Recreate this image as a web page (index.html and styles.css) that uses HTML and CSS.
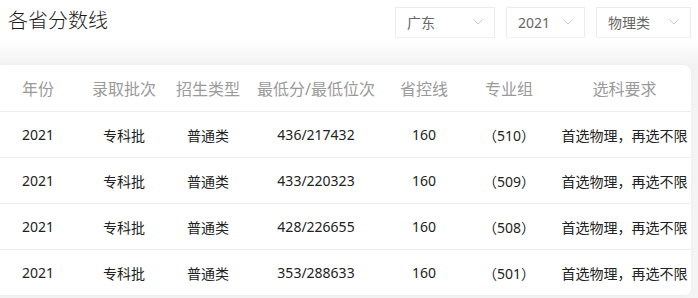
FILE: index.html
```html
<!DOCTYPE html>
<html lang="zh-CN">
<head>
<meta charset="utf-8">
<link rel="stylesheet" href="styles.css">
</head>
<body>
<header class="top">
  <h1 class="title">各省分数线</h1>
  <div class="filters">
    <div class="select s-prov"><span>广东</span><svg class="chev" viewBox="0 0 10 6" width="10" height="6"><path d="M0.5 0.5 L5 5 L9.5 0.5" fill="none" stroke="#c8c8c8" stroke-width="1"/></svg></div>
    <div class="select s-year"><span>2021</span><svg class="chev" viewBox="0 0 10 6" width="10" height="6"><path d="M0.5 0.5 L5 5 L9.5 0.5" fill="none" stroke="#c8c8c8" stroke-width="1"/></svg></div>
    <div class="select s-type"><span>物理类</span><svg class="chev" viewBox="0 0 10 6" width="10" height="6"><path d="M0.5 0.5 L5 5 L9.5 0.5" fill="none" stroke="#c8c8c8" stroke-width="1"/></svg></div>
  </div>
</header>
<section class="panel">
  <div class="card">
    <table class="grid">
      <colgroup>
        <col class="c1"><col class="c2"><col class="c3"><col class="c4"><col class="c5"><col class="c6"><col class="c7">
      </colgroup>
      <thead>
        <tr><th>年份</th><th>录取批次</th><th>招生类型</th><th>最低分/最低位次</th><th>省控线</th><th>专业组</th><th>选科要求</th></tr>
      </thead>
      <tbody>
        <tr><td>2021</td><td>专科批</td><td>普通类</td><td>436/217432</td><td>160</td><td>（510）</td><td>首选物理，再选不限</td></tr>
        <tr><td>2021</td><td>专科批</td><td>普通类</td><td>433/220323</td><td>160</td><td>（509）</td><td>首选物理，再选不限</td></tr>
        <tr><td>2021</td><td>专科批</td><td>普通类</td><td>428/226655</td><td>160</td><td>（508）</td><td>首选物理，再选不限</td></tr>
        <tr><td>2021</td><td>专科批</td><td>普通类</td><td>353/288633</td><td>160</td><td>（501）</td><td>首选物理，再选不限</td></tr>
      </tbody>
    </table>
  </div>
</section>
</body>
</html>
```

FILE: styles.css
```css
html, body {
  margin: 0;
  padding: 0;
  background: #f4f4f4;
}
body {
  font-family: "Noto Sans", "Noto Sans CJK SC", sans-serif;
  color: #333;
  width: 698px;
  height: 298px;
  overflow: hidden;
}
.top {
  display: flex;
  justify-content: space-between;
  align-items: flex-start;
  height: 40px;
  padding: 0 7px 0 8px;
  background: #fff;
}
.title {
  margin: 6px 0 0;
  font-size: 20px;
  line-height: 28px;
  font-weight: 300;
  color: #1a1a1a;
  font-family: "Noto Sans CJK SC", sans-serif;
}
.filters {
  display: flex;
  gap: 11px;
  margin-top: 7px;
}
.select {
  box-sizing: border-box;
  height: 31px;
  border: 1px solid #ececec;
  border-bottom-color: #f2f2f2;
  display: flex;
  align-items: center;
  justify-content: space-between;
  padding: 0 11px 0 11px;
  font-size: 14px;
  color: #666;
  background: #fff;
}
.select span { line-height: 20px; }
.s-prov { width: 100px; }
.s-year { width: 79px; }
.s-type { width: 95px; }
.chev { display: block; margin-top: -2px; }
.panel {
  background: linear-gradient(#ffffff 0px, #f3f3f3 24px, #f4f4f4 100%);
  padding: 25px 7px 0 0;
  height: 258px;
  box-sizing: border-box;
}
.card {
  width: 691px;
  background: #fff;
  border-radius: 0 8px 8px 0;
  box-shadow: 0 0 3px rgba(0,0,0,0.04);
  overflow: hidden;
}
.grid {
  width: 691px;
  border-collapse: collapse;
  table-layout: fixed;
}
.c1 { width: 76px; }
.c2 { width: 96px; }
.c3 { width: 72px; }
.c4 { width: 144px; }
.c5 { width: 72px; }
.c6 { width: 98px; }
.c7 { width: 133px; }
.grid th {
  height: 46px;
  padding: 0;
  font-size: 16px;
  font-weight: normal;
  color: #9a9a9a;
  text-align: center;
  border-bottom: 1px solid #ededed;
  white-space: nowrap;
}
.grid td {
  height: 45px;
  padding: 0;
  font-size: 14px;
  color: #222;
  text-align: center;
  border-bottom: 1px solid #ededed;
  white-space: nowrap;
}
```
